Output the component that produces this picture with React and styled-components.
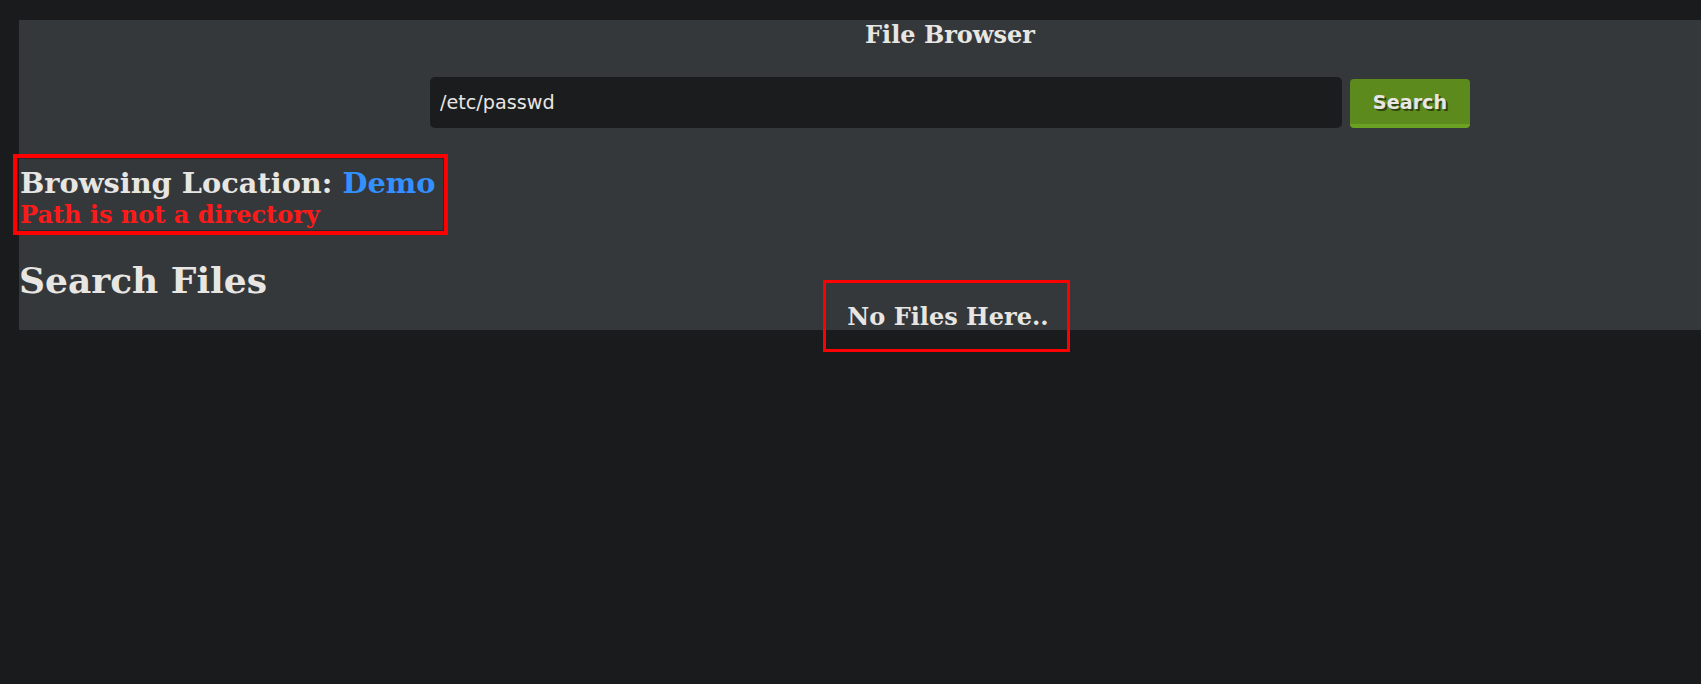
import React from "react";
import styled, { createGlobalStyle } from "styled-components";

const Global = createGlobalStyle`
  html, body {
    margin: 0;
    padding: 0;
    background: #1a1b1d;
    overflow: hidden;
  }
  body {
    font-family: "DejaVu Serif", serif;
    color: #e8e6e3;
  }
`;

const Page = styled.div`
  padding: 20px 0 0 19px;
  min-height: 684px;
  box-sizing: border-box;
`;

const Panel = styled.div`
  width: 1862px;
  height: 310px;
  background: #35383b;
  display: flex;
  flex-direction: column;
`;

const Title = styled.h1`
  margin: 0;
  font-family: "DejaVu Serif", serif;
  font-weight: bold;
  font-size: 24px;
  line-height: normal;
  text-align: center;
  color: #e8e6e3;
`;

const SearchForm = styled.form`
  display: flex;
  justify-content: center;
  align-items: flex-end;
  gap: 8px;
  margin-top: 28px;
`;

const PathInput = styled.input`
  width: 912px;
  height: 51px;
  box-sizing: border-box;
  padding: 0 10px;
  border: none;
  border-radius: 5px;
  background: #1b1c1e;
  color: #e8e6e3;
  font-family: "DejaVu Sans", sans-serif;
  font-size: 19.2px;
  outline: none;
`;

const SearchButton = styled.button`
  width: 120px;
  height: 49px;
  box-sizing: border-box;
  border: none;
  border-bottom: 4px solid #6aa122;
  border-radius: 4px;
  background: #5c8a1d;
  color: #e8e6e3;
  font-family: "DejaVu Sans", sans-serif;
  font-weight: bold;
  font-size: 19.2px;
  text-shadow: 2px 2px 0 #2f4510;
  padding: 2px 0 0;
  cursor: pointer;
`;

const Highlight = styled.div`
  border: ${(p) => p.$thick}px solid #ff0000;
  box-shadow: ${(p) => (p.$inner ? "inset 0 0 0 1px #26282a" : "none")};
  width: fit-content;
  box-sizing: border-box;
`;

const LocationBox = styled(Highlight)`
  margin: 26px 0 0 -6px;
  padding: 8px 9px 2px 3px;
`;

const LocationLine = styled.div`
  font-weight: bold;
  font-size: 28.8px;
  line-height: normal;
  color: #e8e6e3;
`;

const LocationName = styled.span`
  color: #3391ff;
`;

const ErrorLine = styled.div`
  font-weight: bold;
  font-size: 24px;
  line-height: normal;
  color: #ff1a1a;
`;

const Results = styled.div`
  display: grid;
  grid-template-columns: 1fr auto 1fr;
  align-items: start;
  margin-top: 24px;
`;

const SectionTitle = styled.h2`
  margin: 0;
  font-weight: bold;
  font-size: 36px;
  line-height: normal;
  color: #e8e6e3;
`;

const EmptyBox = styled(Highlight)`
  margin: 21px 7px 0 0;
  padding: 19px 18px 18px 21px;
  font-weight: bold;
  font-size: 24px;
  line-height: normal;
  color: #e8e6e3;
`;

export default function App() {
  return (
    <>
      <Global />
      <Page>
        <Panel>
          <Title>File Browser</Title>
          <SearchForm onSubmit={(e) => e.preventDefault()}>
            <PathInput defaultValue="/etc/passwd" />
            <SearchButton type="submit">Search</SearchButton>
          </SearchForm>
          <LocationBox $thick={4} $inner>
            <LocationLine>
              Browsing Location: <LocationName>Demo</LocationName>
            </LocationLine>
            <ErrorLine>Path is not a directory</ErrorLine>
          </LocationBox>
          <Results>
            <SectionTitle>Search Files</SectionTitle>
            <EmptyBox $thick={3}>No Files Here..</EmptyBox>
            <div />
          </Results>
        </Panel>
      </Page>
    </>
  );
}
